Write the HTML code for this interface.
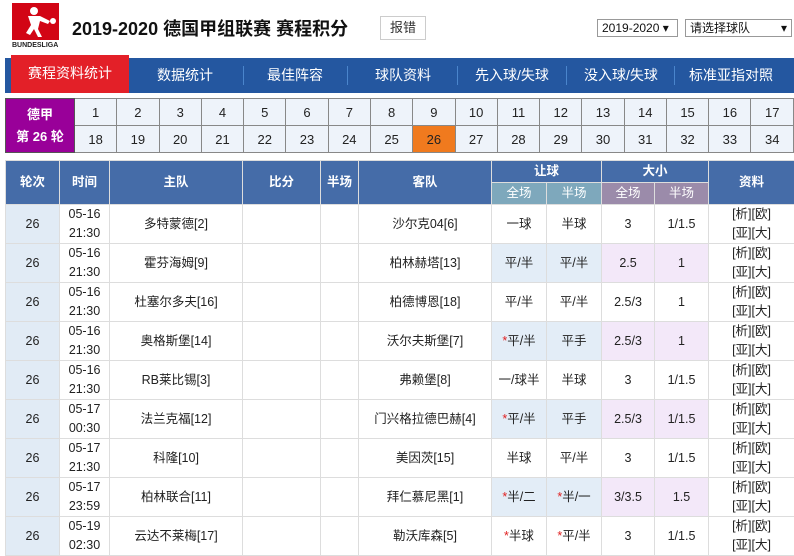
<!DOCTYPE html>
<html><head><meta charset="utf-8"><style>
*{margin:0;padding:0;box-sizing:border-box}
body{width:794px;height:556px;overflow:hidden;background:#fff;font-family:"Liberation Sans","Noto Sans CJK SC",sans-serif;font-size:13px;color:#333;position:relative}
.abs{position:absolute}
.logo{left:12px;top:3px;width:47px;height:37px;background:#d20515}
.bl{left:12px;top:42px;font-size:7px;font-weight:bold;color:#222;letter-spacing:0}
.title{left:72px;top:15px;font-size:18px;font-weight:bold;color:#111}
.btn{left:380px;top:16px;width:46px;height:24px;border:1px solid #ccc;text-align:center;line-height:22px;font-size:13px;background:#fff}
.sel{top:19px;height:18px;border:1px solid #999;font-size:12px;line-height:16px;padding-left:4px;color:#111}
.nav{left:5px;top:58px;width:789px;height:35px;background:#2457a0}
.nav span{position:absolute;top:0;line-height:35px;color:#fff;font-size:14px}
.sep{position:absolute;top:8px;width:1px;height:19px;background:#4a85cc}
.act{left:11px;top:55px;width:118px;height:38px;background:#e32028;color:#fff;font-size:14px;text-align:center;line-height:36px}
table.r{position:absolute;left:5px;top:98px;border-collapse:collapse;table-layout:fixed}
table.r td{border:1px solid #888;width:42.3px;height:27px;text-align:center;background:#eef3fa;font-size:13px;color:#222}
table.r td.p{background:#990099;color:#fff;font-weight:bold;width:69px;border-color:#555}
table.r td.o{background:#f07a1e}
table.m{position:absolute;left:5px;top:160px;border-collapse:collapse;table-layout:fixed;width:789px}
table.m td,table.m th{border:1px solid #ddd;text-align:center;font-size:12.5px;line-height:19px}
table.m th{background:#456ca8;color:#fff;font-weight:bold;height:22px}
th.a{background:#7ea8bc!important;font-weight:normal!important}
th.b{background:#9b8baa!important;font-weight:normal!important}
table.m td{height:39px;color:#222}
td.rd{background:#e1ebf5}
td.t{color:#1d3c7a}
.s1 td.h{background:#e3edf7}.s1 td.d{background:#f3e8f9}
i{color:#e02020;font-style:normal}
</style></head><body>
<div class="abs logo"><svg width="47" height="37"><circle cx="22" cy="8" r="4" fill="#fff"/><path d="M16 13 L28 13 L38 18 L36 21 L28 18 L26 26 L30 34 L26 34 L22 26 L18 32 L14 30 L19 22 L17 16 Z" fill="#fff"/><circle cx="41" cy="18" r="3" fill="#fff"/></svg></div>
<div class="abs bl">BUNDESLIGA</div>
<div class="abs title">2019-2020 德国甲组联赛 赛程积分</div>
<div class="abs btn">报错</div>
<div class="abs sel" style="left:597px;width:81px">2019-2020 ▾</div>
<div class="abs sel" style="left:685px;width:107px">请选择球队<span style="position:absolute;right:4px">▾</span></div>
<div class="abs nav">
<span style="left:152px">数据统计</span><div class="sep" style="left:238px"></div>
<span style="left:262px">最佳阵容</span><div class="sep" style="left:342px"></div>
<span style="left:370px">球队资料</span><div class="sep" style="left:452px"></div>
<span style="left:470px">先入球/失球</span><div class="sep" style="left:561px"></div>
<span style="left:579px">没入球/失球</span><div class="sep" style="left:669px"></div>
<span style="left:684px">标准亚指对照</span>
</div>
<div class="abs act">赛程资料统计</div>
<table class="r"><tr><td class="p" rowspan="2" style="line-height:22px">德甲<br>第 26 轮</td><td>1</td><td>2</td><td>3</td><td>4</td><td>5</td><td>6</td><td>7</td><td>8</td><td>9</td><td>10</td><td>11</td><td>12</td><td>13</td><td>14</td><td>15</td><td>16</td><td>17</td></tr>
<tr><td>18</td><td>19</td><td>20</td><td>21</td><td>22</td><td>23</td><td>24</td><td>25</td><td class="o">26</td><td>27</td><td>28</td><td>29</td><td>30</td><td>31</td><td>32</td><td>33</td><td>34</td></tr></table>
<table class="m">
<colgroup><col style="width:54px"><col style="width:50px"><col style="width:133px"><col style="width:78px"><col style="width:38px"><col style="width:133px"><col style="width:55px"><col style="width:55px"><col style="width:53px"><col style="width:54px"><col style="width:86px"></colgroup>
<tr><th rowspan="2">轮次</th><th rowspan="2">时间</th><th rowspan="2">主队</th><th rowspan="2">比分</th><th rowspan="2">半场</th><th rowspan="2">客队</th><th colspan="2">让球</th><th colspan="2">大小</th><th rowspan="2">资料</th></tr>
<tr><th class="a">全场</th><th class="a">半场</th><th class="b">全场</th><th class="b">半场</th></tr>
<tr><td class="rd">26</td><td>05-16<br>21:30</td><td class="t">多特蒙德[2]</td><td></td><td></td><td class="t">沙尔克04[6]</td><td class="h">一球</td><td class="h">半球</td><td class="d">3</td><td class="d">1/1.5</td><td class="t">[析][欧]<br>[亚][大]</td></tr>
<tr class="s1"><td class="rd">26</td><td>05-16<br>21:30</td><td class="t">霍芬海姆[9]</td><td></td><td></td><td class="t">柏林赫塔[13]</td><td class="h">平/半</td><td class="h">平/半</td><td class="d">2.5</td><td class="d">1</td><td class="t">[析][欧]<br>[亚][大]</td></tr>
<tr><td class="rd">26</td><td>05-16<br>21:30</td><td class="t">杜塞尔多夫[16]</td><td></td><td></td><td class="t">柏德博恩[18]</td><td class="h">平/半</td><td class="h">平/半</td><td class="d">2.5/3</td><td class="d">1</td><td class="t">[析][欧]<br>[亚][大]</td></tr>
<tr class="s1"><td class="rd">26</td><td>05-16<br>21:30</td><td class="t">奥格斯堡[14]</td><td></td><td></td><td class="t">沃尔夫斯堡[7]</td><td class="h"><i>*</i>平/半</td><td class="h">平手</td><td class="d">2.5/3</td><td class="d">1</td><td class="t">[析][欧]<br>[亚][大]</td></tr>
<tr><td class="rd">26</td><td>05-16<br>21:30</td><td class="t">RB莱比锡[3]</td><td></td><td></td><td class="t">弗赖堡[8]</td><td class="h">一/球半</td><td class="h">半球</td><td class="d">3</td><td class="d">1/1.5</td><td class="t">[析][欧]<br>[亚][大]</td></tr>
<tr class="s1"><td class="rd">26</td><td>05-17<br>00:30</td><td class="t">法兰克福[12]</td><td></td><td></td><td class="t">门兴格拉德巴赫[4]</td><td class="h"><i>*</i>平/半</td><td class="h">平手</td><td class="d">2.5/3</td><td class="d">1/1.5</td><td class="t">[析][欧]<br>[亚][大]</td></tr>
<tr><td class="rd">26</td><td>05-17<br>21:30</td><td class="t">科隆[10]</td><td></td><td></td><td class="t">美因茨[15]</td><td class="h">半球</td><td class="h">平/半</td><td class="d">3</td><td class="d">1/1.5</td><td class="t">[析][欧]<br>[亚][大]</td></tr>
<tr class="s1"><td class="rd">26</td><td>05-17<br>23:59</td><td class="t">柏林联合[11]</td><td></td><td></td><td class="t">拜仁慕尼黑[1]</td><td class="h"><i>*</i>半/二</td><td class="h"><i>*</i>半/一</td><td class="d">3/3.5</td><td class="d">1.5</td><td class="t">[析][欧]<br>[亚][大]</td></tr>
<tr><td class="rd">26</td><td>05-19<br>02:30</td><td class="t">云达不莱梅[17]</td><td></td><td></td><td class="t">勒沃库森[5]</td><td class="h"><i>*</i>半球</td><td class="h"><i>*</i>平/半</td><td class="d">3</td><td class="d">1/1.5</td><td class="t">[析][欧]<br>[亚][大]</td></tr>
</table>
</body></html>
